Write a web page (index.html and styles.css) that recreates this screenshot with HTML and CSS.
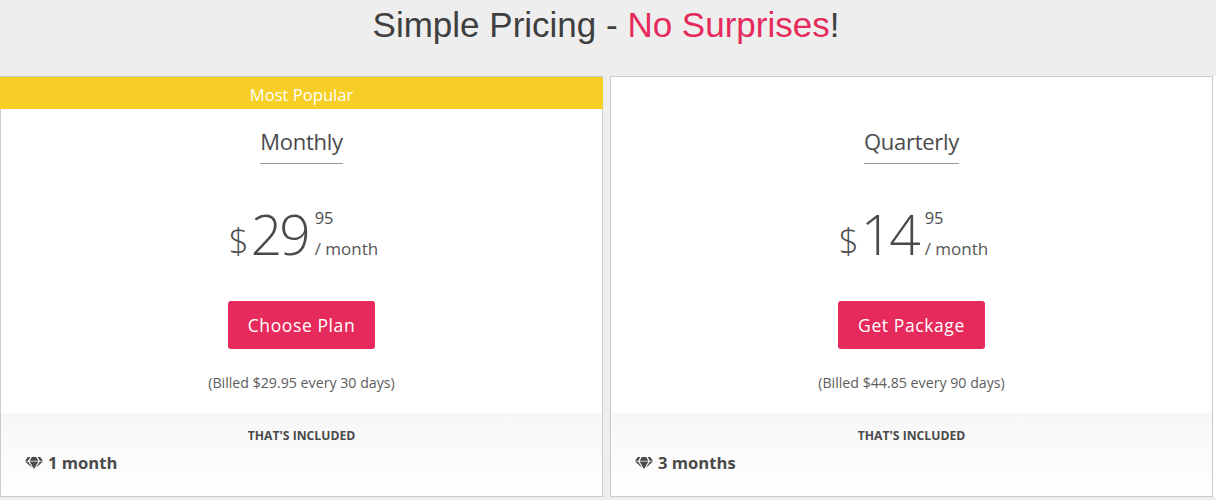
FILE: index.html
```html
<!DOCTYPE html>
<html lang="en">
<head>
<meta charset="utf-8">
<title>Simple Pricing</title>
<link rel="stylesheet" href="styles.css">
</head>
<body>
<h1 class="title">Simple Pricing - <span class="accent">No Surprises</span>!</h1>
<main class="plans">
  <section class="card">
    <div class="ribbon">Most Popular</div>
    <div class="body">
      <h2 class="name">Monthly</h2>
      <div class="price"><span class="cur">$</span><span class="amount">29</span><span class="side"><span class="cents">95</span><span class="per">/ month</span></span></div>
      <a class="btn" href="#">Choose Plan</a>
      <p class="billed">(Billed $29.95 every 30 days)</p>
    </div>
    <div class="included">
      <h3 class="inc-title">THAT'S INCLUDED</h3>
      <div class="feature"><svg class="gem" viewBox="0 0 576 512" preserveAspectRatio="none"><path d="M485.5 0L576 160H474.9L405.7 0h79.8zm-128 0l69.2 160H149.3L218.5 0h139zm-267 0h79.8l-69.2 160H0L90.5 0zM0 192h100.7l123 251.7c1.5 3.1-2.7 5.9-5 3.3L0 192zm148.2 0h279.6l-137 318.2c-1 2.4-4.5 2.4-5.5 0L148.2 192zm204.1 251.7l123-251.7H576L357.3 446.9c-2.3 2.7-6.5-.1-5-3.2z" fill="#4a4a4a"/></svg>1 month</div>
    </div>
  </section>
  <section class="card">
    <div class="ribbon ribbon-empty"></div>
    <div class="body">
      <h2 class="name">Quarterly</h2>
      <div class="price"><span class="cur">$</span><span class="amount">14</span><span class="side"><span class="cents">95</span><span class="per">/ month</span></span></div>
      <a class="btn" href="#">Get Package</a>
      <p class="billed">(Billed $44.85 every 90 days)</p>
    </div>
    <div class="included">
      <h3 class="inc-title">THAT'S INCLUDED</h3>
      <div class="feature"><svg class="gem" viewBox="0 0 576 512" preserveAspectRatio="none"><path d="M485.5 0L576 160H474.9L405.7 0h79.8zm-128 0l69.2 160H149.3L218.5 0h139zm-267 0h79.8l-69.2 160H0L90.5 0zM0 192h100.7l123 251.7c1.5 3.1-2.7 5.9-5 3.3L0 192zm148.2 0h279.6l-137 318.2c-1 2.4-4.5 2.4-5.5 0L148.2 192zm204.1 251.7l123-251.7H576L357.3 446.9c-2.3 2.7-6.5-.1-5-3.2z" fill="#4a4a4a"/></svg>3 months</div>
    </div>
  </section>
</main>
</body>
</html>
```
FILE: styles.css
```css
* { box-sizing: border-box; }
html, body { margin: 0; height: 500px; overflow: hidden; }
body { background: #eee; font-family: "Open Sans", "Noto Sans", sans-serif; color: #4a4a4a; }
.title { margin: 0; height: 76px; padding: 5px 4px 0 0; text-align: center; font: 400 35px/40px "Liberation Sans", Arial, sans-serif; color: #3f3f3f; }
.accent { color: #e62a5c; }
.plans { display: grid; grid-template-columns: 603px 603px; column-gap: 7px; background: #fff; }
.card { height: 421px; background: #fff; border: 1px solid #ccc; display: flex; flex-direction: column; }
.card + .card { box-shadow: -7px 0 0 #eee; }
.ribbon { height: 32px; margin: 0 -1px; background: #f6ce25; color: #fff; text-align: center; font-size: 16.6px; line-height: 35px; }
.ribbon-empty { background: none; }
.body { flex: 1; display: flex; flex-direction: column; align-items: center; }
.name { margin: 18px 0 0; padding-bottom: 8px; border-bottom: 1px solid #999; font-size: 22px; font-weight: 400; line-height: 28px; letter-spacing: -0.3px; }
.price { display: flex; align-items: flex-end; margin-top: 34px; height: 64px; padding-left: 4px; }
.cur { font-size: 35px; font-weight: 300; line-height: 46px; margin-right: 2px; margin-bottom: -2px; }
.amount { font-size: 55px; font-weight: 300; line-height: 64px; letter-spacing: -3px; margin-bottom: -4px; }
.side { display: flex; flex-direction: column; margin-left: 7px; padding-bottom: 2px; }
.cents { font-size: 16.5px; line-height: 41px; }
.per { font-size: 17px; line-height: 22px; color: #555; }
.btn { margin-top: 39px; width: 147px; height: 48px; border-radius: 3px; background: #e62a5c; color: #fff; text-align: center; text-decoration: none; font-size: 17.5px; line-height: 48px; letter-spacing: 0.6px; }
.billed { margin: 24px 0 0; font-size: 14.2px; line-height: 20px; color: #5c5c5c; }
.included { height: 83px; background: linear-gradient(#f7f7f7, #fff); padding: 14px 24px 0; }
.inc-title { margin: 0; text-align: center; font-size: 12.2px; font-weight: 700; line-height: 18px; }
.feature { display: flex; align-items: center; gap: 5px; margin-top: 6px; font-size: 16.6px; font-weight: 700; line-height: 24px; }
.gem { width: 18px; height: 12px; flex: none; }
```
